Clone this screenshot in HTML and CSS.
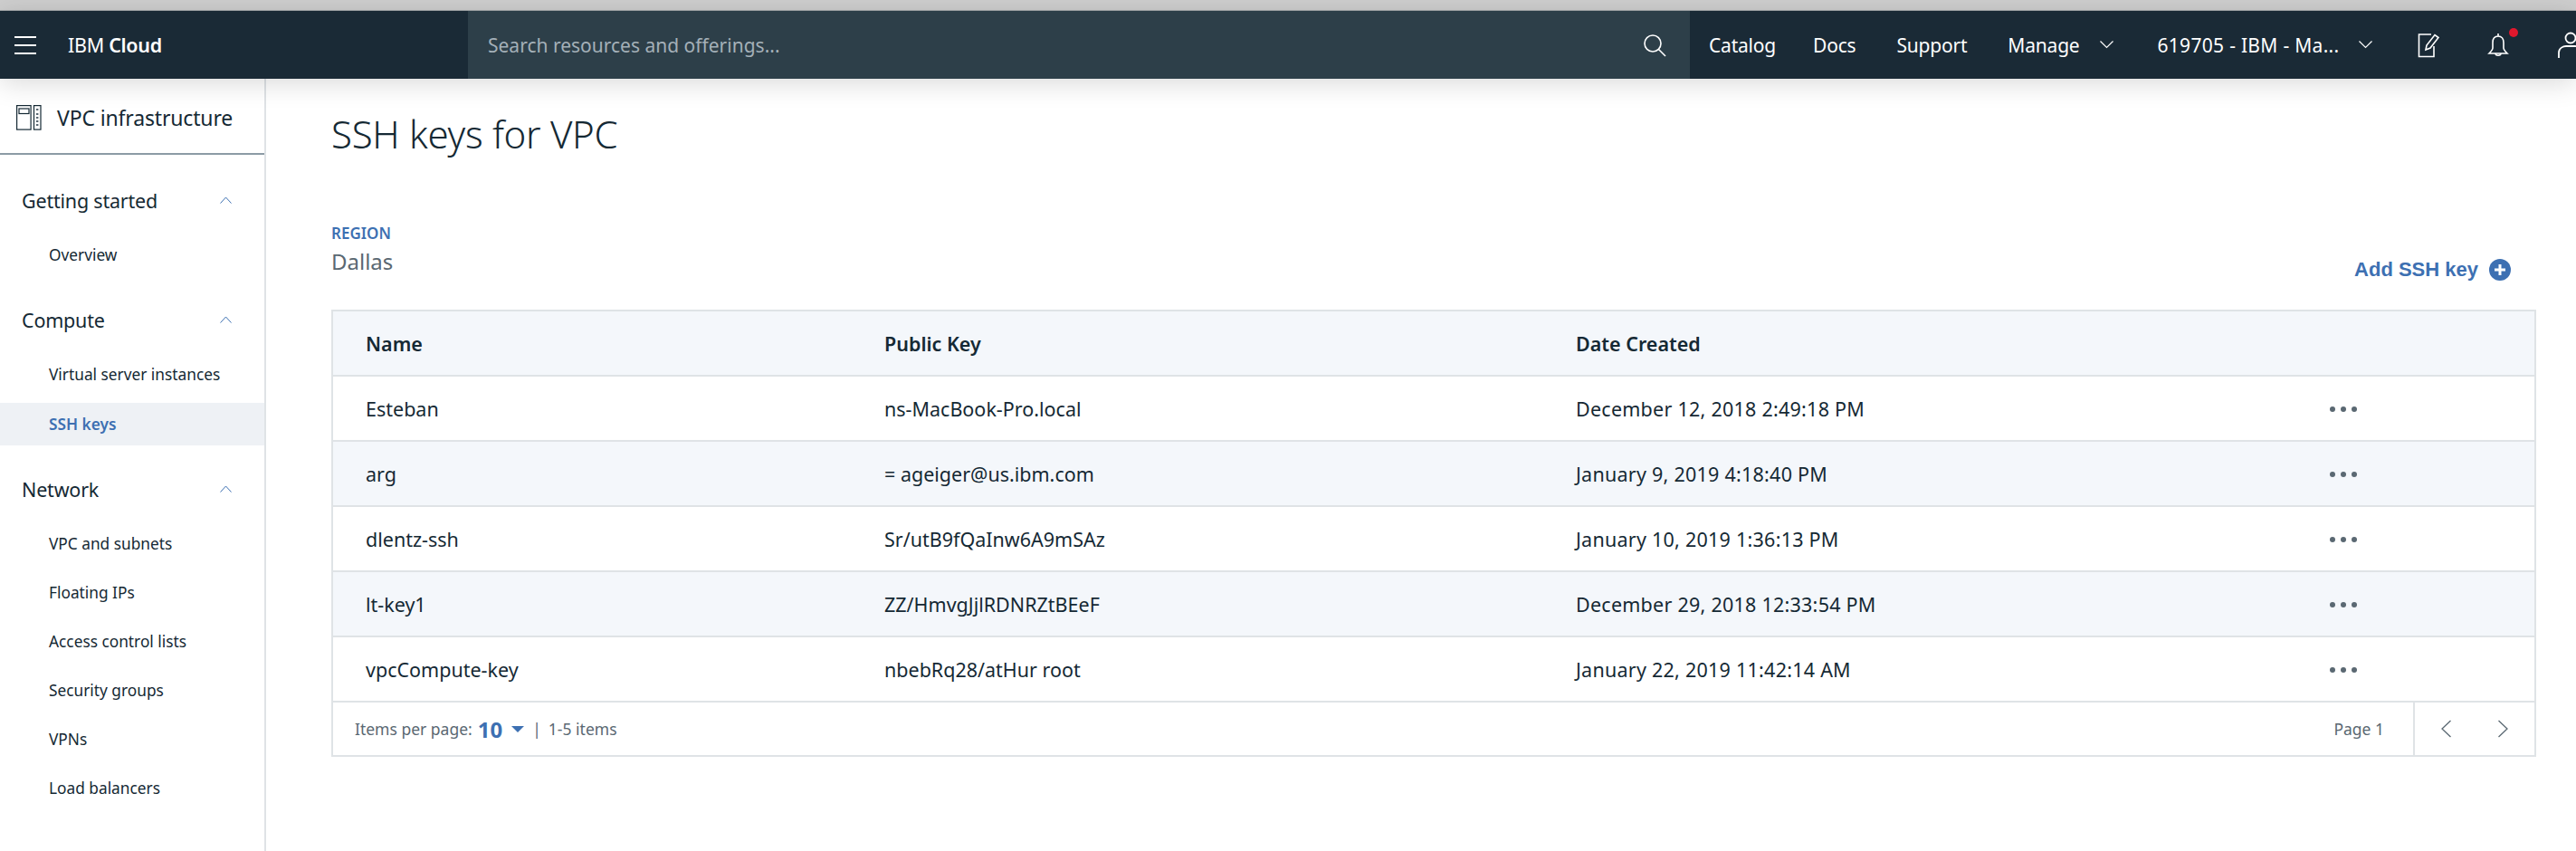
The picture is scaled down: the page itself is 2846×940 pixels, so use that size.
FILE: index.html
```html
<!DOCTYPE html>
<html lang="en">

<head>
  <meta charset="UTF-8">
  <title>SSH keys for VPC | IBM Cloud</title>
  <link rel="stylesheet" href="styles.css">
</head>

<body>
  <div class="browser-strip"></div>

  <header class="topbar">
    <div class="brand">
      <svg class="menu-icon" width="24" height="20" viewBox="0 0 24 20">
        <path d="M0 1h24M0 10h24M0 19h24" stroke="#fff" stroke-width="2" fill="none" />
      </svg>
      <span class="brand-name">IBM <b>Cloud</b></span>
    </div>
    <div class="search">
      <span class="search-text">Search resources and offerings...</span>
      <svg width="26" height="26" viewBox="0 0 26 26" fill="none" stroke="#fff" stroke-width="1.6">
        <circle cx="11" cy="11" r="9" />
        <path d="M17.5 17.5L25 25" />
      </svg>
    </div>
    <nav class="topnav">
      <a class="nav-catalog">Catalog</a>
      <a class="nav-docs">Docs</a>
      <a class="nav-support">Support</a>
      <a class="nav-manage">Manage</a>
      <svg class="nav-chevron" width="15" height="9" viewBox="0 0 15 9" fill="none" stroke="#fff" stroke-width="1.2">
        <path d="M.5.5l7 7 7-7" />
      </svg>
      <a class="nav-account">619705 - IBM - Ma...</a>
      <svg class="nav-chevron" width="15" height="9" viewBox="0 0 15 9" fill="none" stroke="#fff" stroke-width="1.2">
        <path d="M.5.5l7 7 7-7" />
      </svg>
      <svg class="nav-edit" width="26" height="28" viewBox="0 0 26 28" fill="none" stroke="#fff" stroke-width="1.6">
        <path d="M15 2H1.500v24.500H18V15" />
        <path d="M9 19l1-5L19 2.500l4 3L14 17z" />
      </svg>
      <span class="bell">
        <svg width="26" height="28" viewBox="0 0 26 28" fill="none" stroke="#fff" stroke-width="1.6">
          <path d="M13 1v3M13 4c-4 0-6 3-6 7v6c0 2-2 4-4 6h20c-2-2-4-4-4-6v-6c0-4-2-7-6-7z" />
          <path d="M10 23c0 3 6 3 6 0" />
        </svg>
        <i class="bell-dot"></i>
      </span>
      <svg class="nav-user" width="30" height="30" viewBox="0 0 30 30" fill="none" stroke="#fff" stroke-width="1.8">
        <circle cx="15" cy="7" r="5.500" />
        <path d="M2 29v-6c0-5 5-7 8-7h10c3 0 8 2 8 7v6" />
      </svg>
    </nav>
  </header>

  <div class="layout">
    <aside class="sidebar">
      <div class="sidebar-title">
        <svg width="28" height="28" viewBox="0 0 28 28" fill="none" stroke="#152934" stroke-width="1.200">
          <rect x=".6" y=".6" width="15.500" height="26.500" />
          <rect x="3" y="4" width="11" height="5.500" />
          <rect x="19.500" y=".6" width="7.500" height="26.500" />
          <path d="M23.200 4v2M23.200 9v2M23.200 13v2M23.200 17v2M23.200 21v2" stroke-width="2.400" stroke="#5a6872" />
        </svg>
        <span>VPC infrastructure</span>
      </div>

      <div class="side-group first">
        <div class="side-head">Getting started<svg width="13" height="8" viewBox="0 0 13 8" fill="none" stroke="#3d70b2" stroke-width="1"><path d="M.5 7.500l6-6.500 6 6.500" /></svg></div>
        <a class="side-link">Overview</a>
      </div>
      <div class="side-group">
        <div class="side-head">Compute<svg width="13" height="8" viewBox="0 0 13 8" fill="none" stroke="#3d70b2" stroke-width="1"><path d="M.5 7.500l6-6.500 6 6.500" /></svg></div>
        <a class="side-link">Virtual server instances</a>
        <a class="side-link active">SSH keys</a>
      </div>
      <div class="side-group">
        <div class="side-head">Network<svg width="13" height="8" viewBox="0 0 13 8" fill="none" stroke="#3d70b2" stroke-width="1"><path d="M.5 7.500l6-6.500 6 6.500" /></svg></div>
        <a class="side-link">VPC and subnets</a>
        <a class="side-link">Floating IPs</a>
        <a class="side-link">Access control lists</a>
        <a class="side-link">Security groups</a>
        <a class="side-link">VPNs</a>
        <a class="side-link">Load balancers</a>
      </div>
    </aside>

    <main class="content">
      <h1 class="page-title">SSH keys for VPC</h1>

      <div class="toolbar">
        <div>
          <div class="region-label">REGION</div>
          <div class="region-value">Dallas</div>
        </div>
        <a class="add-key">Add SSH key
          <svg width="24" height="24" viewBox="0 0 24 24">
            <circle cx="12" cy="12" r="12" fill="#3d70b2" />
            <path d="M12 6v12M6 12h12" stroke="#fff" stroke-width="3" />
          </svg>
        </a>
      </div>

      <div class="table-wrap">
        <table class="keys">
          <thead>
            <tr>
              <th class="col-name">Name</th>
              <th class="col-key">Public Key</th>
              <th class="col-date">Date Created</th>
              <th></th>
            </tr>
          </thead>
          <tbody>
            <tr>
              <td>Esteban</td>
              <td>ns-MacBook-Pro.local</td>
              <td class="date">December 12, 2018 2:49:18 PM</td>
              <td class="dots"><i></i><i></i><i></i></td>
            </tr>
            <tr>
              <td>arg</td>
              <td>= ageiger@us.ibm.com</td>
              <td class="date">January 9, 2019 4:18:40 PM</td>
              <td class="dots"><i></i><i></i><i></i></td>
            </tr>
            <tr>
              <td>dlentz-ssh</td>
              <td>Sr/utB9fQaInw6A9mSAz</td>
              <td class="date">January 10, 2019 1:36:13 PM</td>
              <td class="dots"><i></i><i></i><i></i></td>
            </tr>
            <tr>
              <td>lt-key1</td>
              <td>ZZ/HmvgJjlRDNRZtBEeF</td>
              <td class="date">December 29, 2018 12:33:54 PM</td>
              <td class="dots"><i></i><i></i><i></i></td>
            </tr>
            <tr>
              <td>vpcCompute-key</td>
              <td>nbebRq28/atHur root</td>
              <td class="date">January 22, 2019 11:42:14 AM</td>
              <td class="dots"><i></i><i></i><i></i></td>
            </tr>
          </tbody>
        </table>

        <div class="pager">
          <div class="pager-left">
            <span>Items per page:</span>
            <b class="per-page">10</b>
            <i class="caret"></i>
            <span class="pipe">|</span>
            <span>1-5 items</span>
          </div>
          <div class="pager-page">Page 1</div>
          <div class="pager-arrows">
            <svg width="11" height="20" viewBox="0 0 11 20" fill="none" stroke="#5a6872" stroke-width="1.300"><path d="M10.500 1L1 10l9.500 9" /></svg>
            <svg width="11" height="20" viewBox="0 0 11 20" fill="none" stroke="#5a6872" stroke-width="1.300"><path d="M.5 1L10 10l-9.500 9" /></svg>
          </div>
        </div>
      </div>
    </main>
  </div>
</body>

</html>
```

FILE: styles.css
```css
* {
  box-sizing: border-box;
}

body {
  margin: 0;
  height: 940px;
  overflow: hidden;
  background: #fff;
  color: #152934;
  font-family: "Noto Sans", "Liberation Sans", sans-serif;
}

.browser-strip {
  height: 12px;
  background: #cfcfcf;
  border-bottom: 1px solid #a9adaf;
}

/* top bar */

.topbar {
  display: flex;
  height: 75px;
  background: #1a2a36;
  color: #fff;
  position: relative;
  z-index: 2;
  box-shadow: 0 4px 30px rgba(0, 0, 0, .16);
}

.brand {
  display: flex;
  align-items: center;
  width: 517px;
  padding-left: 16px;
}

.menu-icon {
  margin-right: 35px;
}

.brand-name {
  font-size: 21.5px;
  letter-spacing: -.3px;
}

.brand-name b {
  font-weight: 600;
}

.search {
  display: flex;
  align-items: center;
  justify-content: space-between;
  width: 1350px;
  padding: 0 26px 0 22px;
  background: #2d3f49;
}

.search-text {
  font-size: 21px;
  color: #a4b0b8;
}

.topnav {
  display: flex;
  align-items: center;
  flex: 1;
  padding-left: 21px;
  font-size: 21px;
  overflow: hidden;
  letter-spacing: -.2px;
}

.topnav a {
  white-space: nowrap;
}

.nav-docs {
  margin-left: 41px;
}

.nav-support {
  margin-left: 45px;
}

.nav-manage {
  margin-left: 45px;
}

.nav-chevron {
  flex: none;
  margin-left: 22px;
}

.nav-account {
  margin-left: 49px;
  letter-spacing: .3px;
}

.nav-edit {
  flex: none;
  margin-left: 50px;
}

.bell {
  position: relative;
  flex: none;
  height: 28px;
  margin-left: 50px;
}

.bell-dot {
  position: absolute;
  top: -5px;
  right: -9px;
  width: 10px;
  height: 10px;
  border-radius: 50%;
  background: #e0182d;
}

.nav-user {
  flex: none;
  margin-left: 52px;
}

/* sidebar */

.layout {
  display: flex;
  height: 853px;
}

.sidebar {
  flex: none;
  width: 294px;
  border-right: 2px solid #dfe3e6;
}

.sidebar-title {
  display: flex;
  align-items: center;
  gap: 17px;
  height: 84px;
  padding: 3px 0 0 18px;
  border-bottom: 2px solid #8c9ba5;
  font-size: 23px;
  letter-spacing: -.15px;
}

.side-group {
  padding-bottom: 25px;
}

.side-group.first {
  padding-top: 30px;
  padding-bottom: 24px;
}

.side-head {
  display: flex;
  align-items: center;
  justify-content: space-between;
  height: 40px;
  padding: 0 36px 0 24px;
  font-size: 21.5px;
  letter-spacing: -.2px;
}

.side-link {
  display: block;
  height: 54px;
  padding-left: 54px;
  font-size: 17.3px;
  line-height: 54px;
}

.side-head + .side-link {
  margin-top: 14px;
}

.side-link.active {
  height: 47px;
  line-height: 47px;
  margin: 4px 0 3px;
  background: #eef1f5;
  color: #3d70b2;
  font-weight: 600;
}

/* main */

.content {
  flex: 1;
  padding: 0 44px 0 72px;
}

.page-title {
  margin: 0;
  padding-top: 32px;
  font-size: 42px;
  line-height: 58px;
  font-weight: 300;
  letter-spacing: -.3px;
}

.toolbar {
  display: flex;
  justify-content: space-between;
  align-items: flex-start;
  height: 165px;
  padding-top: 71px;
}

.region-label {
  font-size: 17px;
  line-height: 20px;
  font-weight: 600;
  color: #3d70b2;
}

.region-value {
  margin-top: 3px;
  font-size: 24px;
  line-height: 36px;
  color: #5a6872;
}

.add-key {
  display: flex;
  align-items: center;
  gap: 12px;
  margin-top: 37px;
  padding-right: 28px;
  font-family: "Liberation Sans", sans-serif;
  font-size: 22px;
  font-weight: 700;
  color: #3d70b2;
}

.table-wrap {
  border: 2px solid #dfe3e6;
  width: 2436px;
}

.keys {
  width: 100%;
  table-layout: fixed;
  border-collapse: collapse;
  font-size: 21.5px;
}

.keys th,
.keys td {
  height: 72px;
  padding: 0;
  text-align: left;
  border-bottom: 2px solid #dfe3e6;
}

.keys th {
  height: 71px;
  font-weight: 600;
  background: #f4f7fb;
}

.keys th:first-child,
.keys td:first-child {
  padding-left: 36px;
}

.col-name {
  width: 609px;
}

.col-key {
  width: 764px;
}

.col-date {
  width: 833px;
}

.date {
  letter-spacing: .25px;
}

.keys tbody tr:nth-child(even) td {
  background: #f4f7fb;
}

.dots i {
  display: inline-block;
  width: 6px;
  height: 6px;
  margin: 0 6px 3px 0;
  border-radius: 50%;
  vertical-align: middle;
  background: #5a6872;
}

.pager {
  display: flex;
  align-items: stretch;
  height: 60px;
  margin-top: -2px;
  border-top: 2px solid #dfe3e6;
  font-size: 17.5px;
  color: #5a6872;
}

.pager-left {
  display: flex;
  align-items: center;
  flex: 1;
  padding-left: 24px;
}

.per-page {
  margin-left: 6px;
  font-size: 24px;
  color: #3d70b2;
}

.caret {
  margin-left: 10px;
  border: 7px solid transparent;
  border-top: 7px solid #3d70b2;
  border-bottom: 0;
}

.pipe {
  margin: 0 8px 0 9px;
}

.pager-page {
  display: flex;
  align-items: center;
  padding-right: 32px;
}

.pager-arrows {
  display: flex;
  align-items: center;
  justify-content: space-between;
  width: 134px;
  padding: 0 29px;
  border-left: 2px solid #dfe3e6;
}
```
